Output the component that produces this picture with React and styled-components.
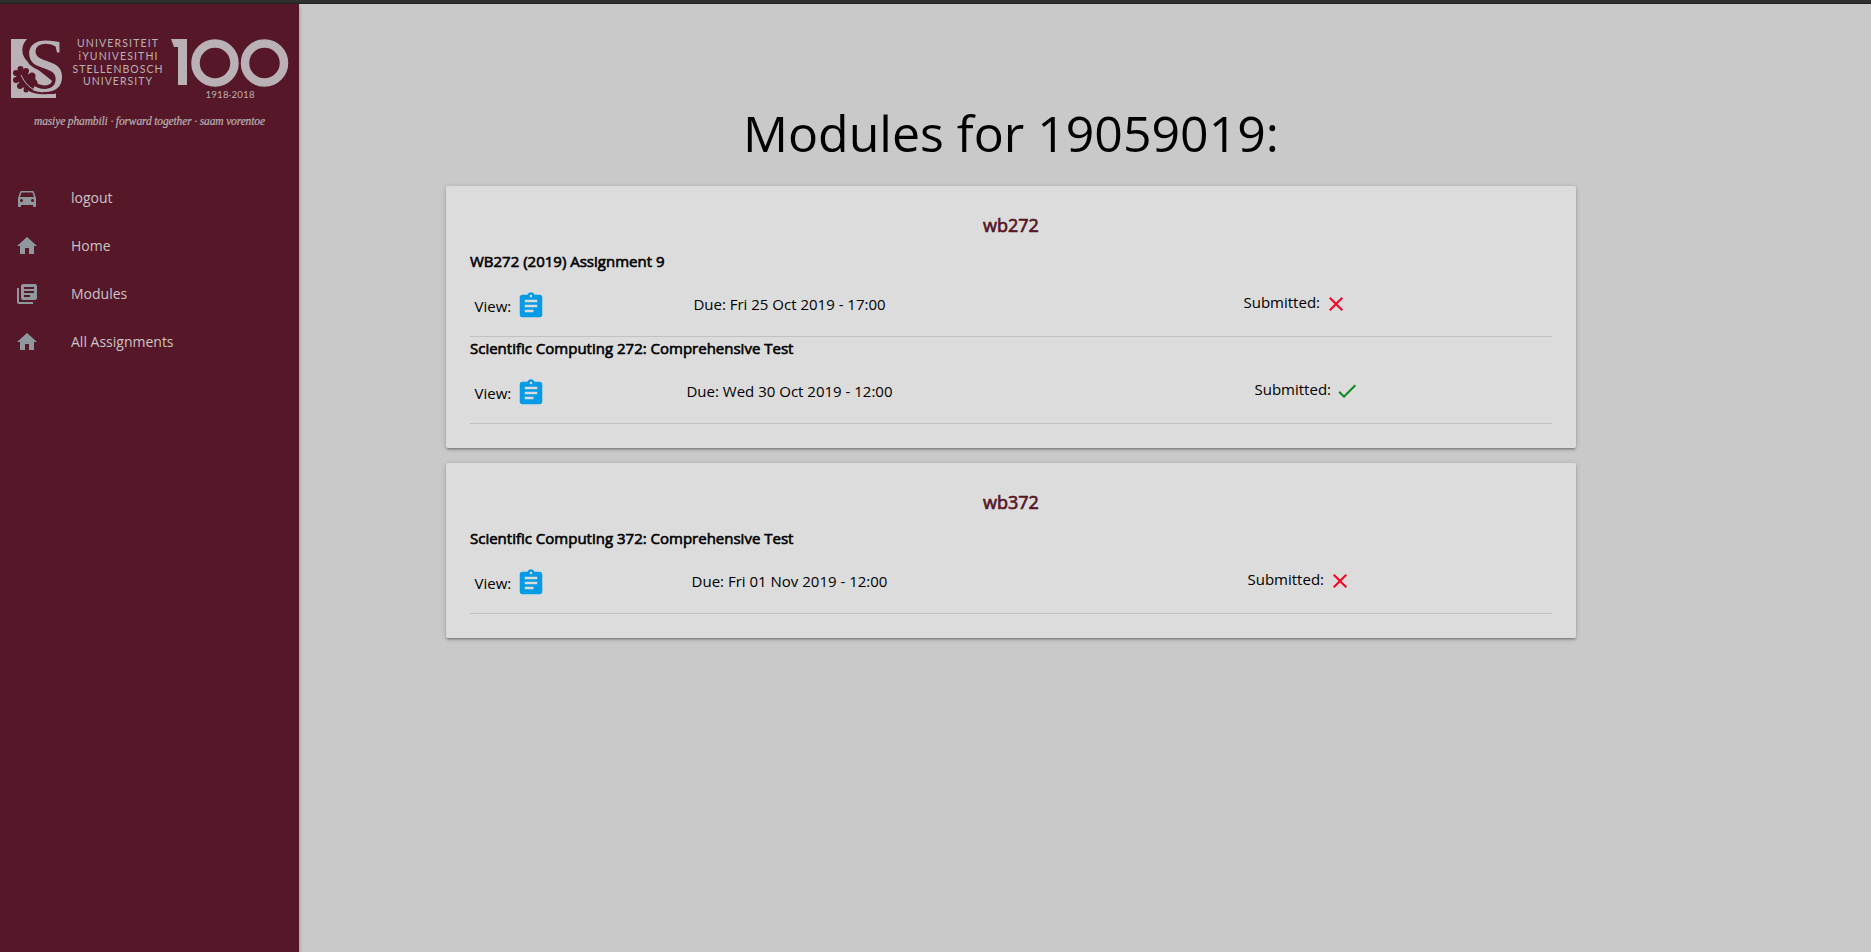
import React from 'react';
import styled, { createGlobalStyle } from 'styled-components';
import { MdDirectionsCar, MdHome, MdLibraryBooks, MdAssignment, MdClose, MdCheck } from 'react-icons/md';

const GlobalStyle = createGlobalStyle`
  * { box-sizing: border-box; }
  body { margin: 0; background: #c9c9c9; color: #000; font: 15px/22.5px "Open Sans", sans-serif; }
`;
const Page = styled.div`
  display: flex; flex-direction: column; height: 952px; overflow: hidden;
`;
const TopBar = styled.div`
  flex: none; height: 4px; background: #2f2f2f; border-bottom: 1px solid #222;
`;
const Body = styled.div`display: flex; flex: 1;`;
const Sidebar = styled.aside`
  width: 299px; background: #561728; box-shadow: 0 2px 4px rgba(0,0,0,.3);
`;
const Brand = styled.div`height: 170px; svg { display: block; }`;
const NavItem = styled.a`
  display: flex; align-items: center; height: 48px; padding-left: 15px;
  color: #ccc3c6; font-size: 14px; text-decoration: none;
  svg { width: 24px; height: 24px; margin-right: 32px; color: #8e989d; }
`;
const Main = styled.main`
  width: 1130px; margin-left: 147px; padding-top: 96px;
`;
const Title = styled.h1`
  margin: 0 0 19px; height: 67px; line-height: 67px; font-size: 50px; font-weight: 400; text-align: center;
`;
const Card = styled.section`
  margin-bottom: 15px; padding: 23px 24px 25px; height: ${p => p.$height}px;
  background: #dcdcdc; border-radius: 2px;
  box-shadow: 0 2px 2px 0 rgba(0,0,0,.14), 0 3px 1px -2px rgba(0,0,0,.12), 0 1px 5px 0 rgba(0,0,0,.2);
`;
const CardTitle = styled.h2`
  margin: 0 0 9px; height: 32px; line-height: 32px; text-align: center; color: #561728;
  font-size: 18px; font-weight: 400; -webkit-text-stroke: .7px;
`;
const Assignment = styled.article`height: 87px; border-bottom: 1px solid #c1c1c1;`;
const Name = styled.h3`
  margin: 0; height: 23px; line-height: 23px; font-size: 15px; font-weight: 400; -webkit-text-stroke: .6px;
`;
const Row = styled.div`
  display: grid; grid-template-columns: 72.5px 485px 1fr; height: 56px; padding: 6px 0 0 4.5px;
`;
const View = styled.div`
  display: flex; align-items: center; padding-top: 4px; gap: 4.5px;
  svg { width: 30px; height: 30px; color: #039be5; flex: none; }
`;
const Due = styled.div`line-height: 50px; text-align: center;`;
const Submitted = styled.div`
  display: flex; align-items: center; gap: 4px; height: 46px; padding-left: ${p => p.$inset}px;
  svg { width: 24px; height: 24px; color: ${p => (p.$ok ? '#0a8a20' : '#fb0020')}; margin-top: 3px; }
`;

const Logo = () => (
  <svg width="299" height="140" viewBox="0 4 299 140" fill="#b9b1b5">
    <path d="M11 39H27C21 45 21 54 26 60L56 84V98H11Z" />
    <text x="24" y="91" fontFamily="Liberation Serif" fontSize="77" stroke="#561728" strokeWidth="7" paintOrder="stroke">S</text>
    <path d="M11 64H21V80L27 90C33 94 41 95 48 94L56 94V98H11Z" />
    <g fill="#561728">
      <circle cx="16" cy="73" r="3" /><circle cx="16" cy="80" r="3" /><circle cx="20.500" cy="69" r="3" />
      <circle cx="26" cy="71" r="3" /><circle cx="32" cy="76" r="3.500" /><circle cx="20" cy="86" r="3" />
      <circle cx="26" cy="90" r="2.500" /><circle cx="34" cy="83" r="3.500" />
      <path d="M17 71L26 71L35 83L33 91L22 87L16 78Z" />
    </g>
    <path d="M21 75C26 86 33 91 43 92" fill="none" stroke="#b9b1b5" strokeWidth="1" />
    <g fontFamily="Lato, sans-serif" fontSize="10.500" textAnchor="middle">
      <text x="117.500" y="47" textLength="81">UNIVERSITEIT</text>
      <text x="118" y="60" textLength="79">iYUNIVESITHI</text>
      <text x="117.500" y="72.500" textLength="90">STELLENBOSCH</text>
      <text x="117.500" y="85" textLength="69">UNIVERSITY</text>
      <text x="230" y="97.500" fontSize="9.700" textLength="49">1918·2018</text>
    </g>
    <path d="M171 39H187V85H178V47H174Z" />
    <g fill="none" stroke="#b9b1b5" strokeWidth="8.500"><circle cx="215" cy="63" r="19.500" /><circle cx="264.500" cy="63" r="19.500" /></g>
    <text x="34" y="125" fontFamily="Liberation Serif" fontStyle="italic" fontSize="11.500" stroke="#b9b1b5" strokeWidth=".2" textLength="231">masiye phambili · forward together · saam vorentoe</text>
  </svg>
);

const nav = [['logout', MdDirectionsCar], ['Home', MdHome], ['Modules', MdLibraryBooks], ['All Assignments', MdHome]];
const modules = [
  { code: 'wb272', height: 262, items: [
    ['WB272 (2019) Assignment 9', 'Fri 25 Oct 2019 - 17:00', false, 211.5],
    ['Scientific Computing 272: Comprehensive Test', 'Wed 30 Oct 2019 - 12:00', true, 222.5]] },
  { code: 'wb372', height: 175, items: [
    ['Scientific Computing 372: Comprehensive Test', 'Fri 01 Nov 2019 - 12:00', false, 215.5]] },
];

export default function App() {
  return (
    <Page>
      <GlobalStyle />
      <TopBar />
      <Body>
        <Sidebar>
          <Brand><Logo /></Brand>
          <nav>{nav.map(([label, Icon]) => <NavItem key={label}><Icon />{label}</NavItem>)}</nav>
        </Sidebar>
        <Main>
          <Title>Modules for 19059019:</Title>
          {modules.map(m => (
            <Card key={m.code} $height={m.height}>
              <CardTitle>{m.code}</CardTitle>
              {m.items.map(([name, due, ok, inset]) => (
                <Assignment key={name}>
                  <Name>{name}</Name>
                  <Row>
                    <View>View: <MdAssignment /></View>
                    <Due>Due: {due}</Due>
                    <Submitted $ok={ok} $inset={inset}>Submitted: {ok ? <MdCheck /> : <MdClose />}</Submitted>
                  </Row>
                </Assignment>
              ))}
            </Card>
          ))}
        </Main>
      </Body>
    </Page>
  );
}
